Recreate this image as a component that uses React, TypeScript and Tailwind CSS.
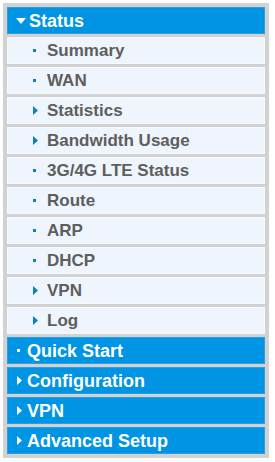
import React from "react";

const font = { fontFamily: '"Liberation Sans", Arial, sans-serif' };

function TriDown() {
  return (
    <svg width="10" height="6" viewBox="0 0 10 6" className="shrink-0">
      <polygon points="0,0 10,0 5,6" fill="#ffffff" />
    </svg>
  );
}

function TriRight({ color }: { color: string }) {
  return (
    <svg width="5" height="9" viewBox="0 0 5 9" className="shrink-0">
      <polygon points="0,0 5,4.5 0,9" fill={color} />
    </svg>
  );
}

function Dot({ color }: { color: string }) {
  return <span className="inline-block w-[3px] h-[3px] shrink-0" style={{ background: color }} />;
}

type Sub = { label: string; kind: "dot" | "tri" };

const subs: Sub[] = [
  { label: "Summary", kind: "dot" },
  { label: "WAN", kind: "dot" },
  { label: "Statistics", kind: "tri" },
  { label: "Bandwidth Usage", kind: "tri" },
  { label: "3G/4G LTE Status", kind: "dot" },
  { label: "Route", kind: "dot" },
  { label: "ARP", kind: "dot" },
  { label: "DHCP", kind: "dot" },
  { label: "VPN", kind: "tri" },
  { label: "Log", kind: "tri" },
];

const heads: Sub[] = [
  { label: "Quick Start", kind: "dot" },
  { label: "Configuration", kind: "tri" },
  { label: "VPN", kind: "tri" },
  { label: "Advanced Setup", kind: "tri" },
];

export default function App() {
  return (
    <div className="bg-white w-[275px] h-[462px]" style={font}>
      <div className="ml-[3px] mt-[3px] w-[266px] bg-[#d2d2d2] p-[4px] flex flex-col gap-[3px]">
        <div className="h-[27px] bg-[#0094e4] border border-[#2a9ee0] flex items-center pl-[8px] gap-[3px] text-white font-bold text-[18px]">
          <TriDown />
          <span className="leading-none">Status</span>
        </div>
        {subs.map((s, i) => (
          <div
            key={i}
            className="h-[27px] bg-[#eef5fd] border border-[#f6f9fe] flex items-center text-[#5e5e5e] font-bold text-[17px]"
          >
            <div className="w-[39px] pl-[25px] flex items-center">
              {s.kind === "dot" ? <Dot color="#0a7fd0" /> : <TriRight color="#0a7fd0" />}
            </div>
            <span className="leading-none">{s.label}</span>
          </div>
        ))}
        {heads.map((s, i) => (
          <div
            key={i}
            className="h-[27px] bg-[#0094e4] border border-[#2a9ee0] flex items-center text-white font-bold text-[18px]"
          >
            <div className="w-[19px] pl-[9px] flex items-center">
              {s.kind === "dot" ? <Dot color="#ffffff" /> : <TriRight color="#ffffff" />}
            </div>
            <span className="leading-none">{s.label}</span>
          </div>
        ))}
      </div>
    </div>
  );
}
